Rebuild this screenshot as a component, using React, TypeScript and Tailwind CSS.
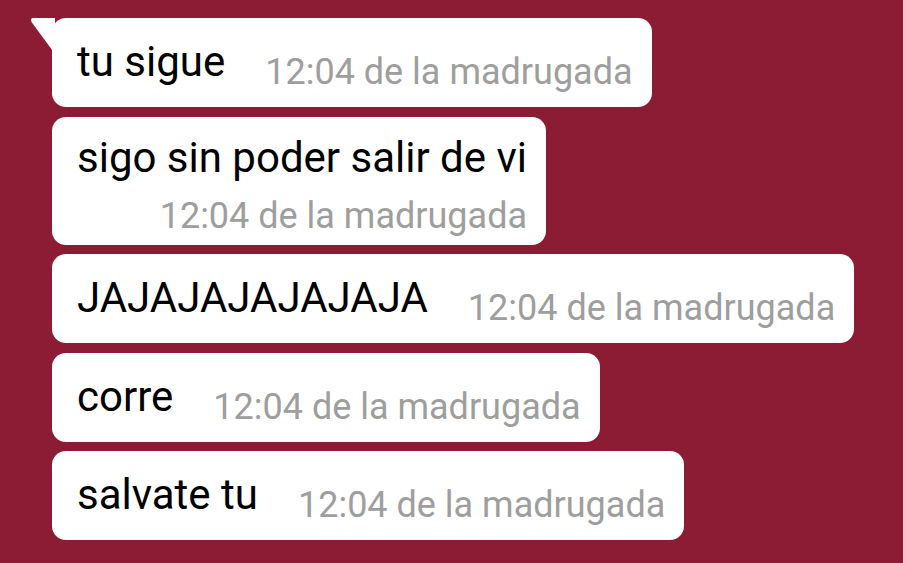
const messages = [
  { text: 'tu sigue', time: '12:04 de la madrugada', tail: true },
  { text: 'sigo sin poder salir de vi', time: '12:04 de la madrugada', stacked: true },
  { text: 'JAJAJAJAJAJAJA', time: '12:04 de la madrugada' },
  { text: 'corre', time: '12:04 de la madrugada' },
  { text: 'salvate tu', time: '12:04 de la madrugada' },
];

function Bubble({ text, time, tail, stacked }: { text: string; time: string; tail?: boolean; stacked?: boolean }) {
  return (
    <div className="relative self-start rounded-[14px] bg-white pl-[25px] pr-[19px]">
      {tail && (
        <svg className="absolute left-[-22px] top-0" width="25" height="36" viewBox="0 0 25 36">
          <path d="M3 0 H25 V36 L1.5 4 Q0 0 3 0 Z" fill="#fff" />
        </svg>
      )}
      {stacked ? (
        <div className="flex h-[128px] flex-col pt-[17px]">
          <span className="text-[42px] leading-[48px] text-black">{text}</span>
          <span className="mt-[10px] self-end text-[36px] leading-[48px] text-[#9e9e9e]">{time}</span>
        </div>
      ) : (
        <div className="flex h-[89px] items-start gap-[40px] pt-[20px]">
          <span className="text-[42px] leading-[48px] text-black">{text}</span>
          <span className="mt-[10px] text-[36px] leading-[48px] text-[#9e9e9e]">{time}</span>
        </div>
      )}
    </div>
  );
}

export default function App() {
  return (
    <div className="flex h-[563px] w-[903px] flex-col gap-[9.5px] bg-[#8b1c33] pl-[52px] pt-[18px]" style={{ fontFamily: 'Roboto, sans-serif' }}>
      {messages.map((m, i) => (
        <Bubble key={i} {...m} />
      ))}
    </div>
  );
}
